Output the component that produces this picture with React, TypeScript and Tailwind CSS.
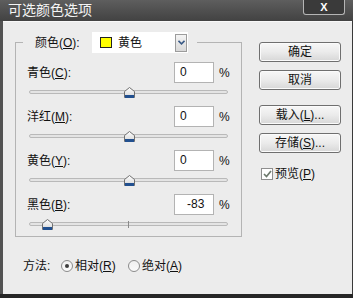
import React from 'react';

const font = { fontFamily: '"Liberation Sans", "Noto Sans CJK SC", sans-serif' };

const Thumb: React.FC<{ left: number }> = ({ left }) => (
  <svg
    width="11"
    height="11"
    viewBox="0 0 11 11"
    className="absolute top-[-4px]"
    style={{ left: left - 5 }}
  >
    <defs>
      <linearGradient id="tg" x1="0" y1="0" x2="0" y2="1">
        <stop offset="0" stopColor="#ffffff" />
        <stop offset="1" stopColor="#d6d6d6" />
      </linearGradient>
    </defs>
    <path d="M0.5 4.5 L5.5 0.5 L10.5 4.5 L10.5 10.5 L0.5 10.5 Z" fill="url(#tg)" stroke="#707070" />
    <rect x="1" y="8" width="9" height="3" fill="#22508f" />
  </svg>
);

// value from -100..100 mapped onto a 199px track
const Row: React.FC<{ name: string; key2: string; value: number; padCls: string; last?: boolean }> = ({
  name,
  key2,
  value,
  padCls,
  last,
}) => {
  const pos = Math.round(((value + 100) / 200) * 198);
  return (
    <div className="flex flex-col">
      <div className="flex items-center h-[21px] pl-[11px]">
        <span className="w-[147px] text-[12px] text-[#111]">
          {name}(<span className="underline">{key2}</span>):
        </span>
        <div className={`w-[40px] h-[21px] bg-white border border-[#b3b3b3] text-[12px] leading-[19px] text-[#111] ${padCls}`}>
          {value}
        </div>
        <span className="ml-[5px] text-[12px] text-[#111]">%</span>
      </div>
      <div className={last ? 'h-[21px]' : 'h-[23px]'}>
        <div className="relative mt-[7px] ml-[13px] w-[199px] h-[4px] rounded-full border border-[#b9b9b9] bg-[#e4e4e4]">
          <div className="absolute left-[98px] top-[-2px] w-[1px] h-[7px] bg-[#8a8a8a]" />
          <Thumb left={pos} />
        </div>
      </div>
    </div>
  );
};

const Btn: React.FC<{ className?: string; children: React.ReactNode }> = ({ className = '', children }) => (
  <div
    className={`h-[20px] w-[82px] rounded-[3px] border border-[#6f6f6f] bg-linear-to-b from-[#f7f7f7] via-[#ebebeb] to-[#d7d7d7] shadow-[inset_0_0_0_1px_#fbfbfb] flex items-center justify-center text-[12px] text-[#111] ${className}`}
  >
    {children}
  </div>
);

const Radio: React.FC<{ on?: boolean }> = ({ on }) => (
  <div className="w-[12px] h-[12px] rounded-full border border-[#8b8b8b] bg-linear-to-b from-[#f0f0f0] to-[#fafafa] flex items-center justify-center">
    {on && <div className="w-[4px] h-[4px] rounded-full bg-[#3d3d3d]" />}
  </div>
);

const App: React.FC = () => {
  return (
    <div className="w-[353px] h-[298px] flex flex-col bg-[#242424] overflow-hidden" style={font}>
      {/* Title bar */}
      <div className="h-[21px] flex items-start bg-linear-to-b from-[#5e5e5e] to-[#424242]">
        <div className="flex-1 pl-[8px] leading-[21px] text-[14px] text-[#f4f4f4]">可选颜色选项</div>
        <div className="mr-[8px] w-[42px] h-[15px] border border-t-0 border-[#b5b5b5] rounded-b-[3px] bg-[#3a3a3a] flex items-center justify-center text-white text-[11px] font-bold leading-none">
          X
        </div>
      </div>

      <div className="flex flex-1">
        <div className="w-[3px] bg-[#525252]" />
        <div className="flex-1 bg-[#ececec] border-t border-[#f8f8f8] flex flex-col">
          <div className="flex pt-[20px] pl-[12px]">
            {/* Group box */}
            <div className="w-[227px] border border-[#b4b4b4] flex flex-col">
              <div className="-mt-[11px] ml-[7px] w-fit h-[21px] flex items-center bg-[#ececec] pl-[12px] pr-[9px]">
                <span className="w-[57px] text-[12px] text-[#111]">
                  颜色(<span className="underline">O</span>):
                </span>
                <div className="w-[96px] h-[21px] bg-white flex items-center">
                  <div className="ml-[8px] w-[12px] h-[11px] border border-[#222] bg-[#ffff00]" />
                  <span className="ml-[6px] text-[12px] text-[#111] flex-1">黄色</span>
                  <div className="mr-[1px] w-[12px] h-[18px] border border-[#9c9c9c] bg-linear-to-b from-[#f4f4f4] to-[#d9d9d9] flex items-center justify-center">
                    <svg width="7" height="5" viewBox="0 0 7 5">
                      <path d="M0.5 0.8 L3.5 3.8 L6.5 0.8" fill="none" stroke="#3a5a86" strokeWidth="1.6" />
                    </svg>
                  </div>
                </div>
              </div>
              <div className="mt-[9px] flex flex-col">
                <Row name="青色" key2="C" value={0} padCls="pl-[5px]" />
                <Row name="洋红" key2="M" value={0} padCls="pl-[5px]" />
                <Row name="黄色" key2="Y" value={0} padCls="pl-[5px]" />
                <Row name="黑色" key2="B" value={-83} padCls="pl-[12px]" last />
              </div>
            </div>

            {/* Buttons */}
            <div className="ml-[17px] flex flex-col">
              <Btn>确定</Btn>
              <Btn className="mt-[8px]">取消</Btn>
              <Btn className="mt-[15px]">
                载入(<span className="underline">L</span>)...
              </Btn>
              <Btn className="mt-[8px]">
                存储(<span className="underline">S</span>)...
              </Btn>
              <div className="mt-[13px] h-[16px] flex items-center">
                <div className="ml-[2px] w-[12px] h-[12px] border border-[#8e8e8e] bg-white flex items-center justify-center">
                  <svg width="9" height="8" viewBox="0 0 9 8">
                    <path d="M1 4 L3.5 6.5 L8 1" fill="none" stroke="#6e7a6e" strokeWidth="1.7" />
                  </svg>
                </div>
                <span className="ml-[2px] text-[12px] text-[#111]">
                  预览(<span className="underline">P</span>)
                </span>
              </div>
            </div>
          </div>

          {/* Method */}
          <div className="mt-[21px] h-[16px] pl-[20px] flex items-center text-[12px] text-[#111]">
            <span className="w-[38px]">方法:</span>
            <div className="w-[67px] flex items-center">
              <Radio on />
              <span className="ml-[2px]">
                相对(<span className="underline">R</span>)
              </span>
            </div>
            <div className="flex items-center">
              <Radio />
              <span className="ml-[2px]">
                绝对(<span className="underline">A</span>)
              </span>
            </div>
          </div>
        </div>
        <div className="w-[1px] bg-[#3a3a3a]" />
      </div>
      <div className="h-[4px] bg-[#262626]" />
    </div>
  );
};

export default App;
